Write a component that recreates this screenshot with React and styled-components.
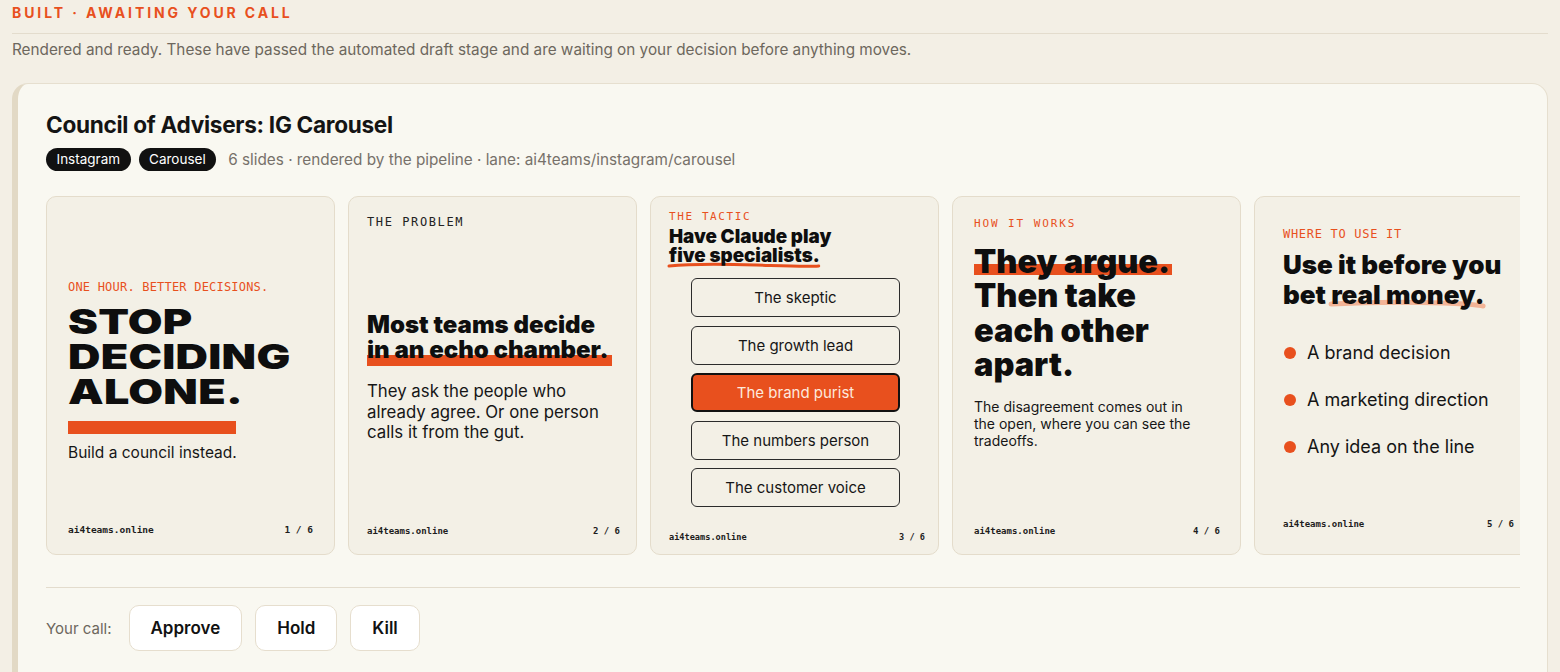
import styled, { createGlobalStyle } from 'styled-components'

const ORANGE = '#e8501e'
const INK = '#141414'
const MONO = '"DejaVu Sans Mono", "Liberation Mono", monospace'
const HEAVY = 'Inter, "Liberation Sans", sans-serif'

const GlobalStyle = createGlobalStyle`
  body {
    margin: 0;
    background: #f3efe5;
    font-family: Inter, "Noto Sans", sans-serif;
    color: ${INK};
  }
`

const Page = styled.div`
  padding: 4px 12px 0;
`

const SectionHead = styled.h2`
  margin: 0;
  padding-bottom: 12px;
  border-bottom: 1px solid #e3dccd;
  font-size: 14px;
  line-height: 17px;
  font-weight: 700;
  letter-spacing: 2.9px;
  color: ${ORANGE};
`

const Lede = styled.p`
  margin: 7px 0 24px;
  font-size: 15.3px;
  line-height: 18px;
  color: #6d675d;
`

const Card = styled.section`
  background: #f9f8f1;
  border: 1px solid #e6dfcf;
  border-left: 6px solid #e2d9c5;
  border-radius: 16px;
  padding: 27px 27px 40px 28px;
`

const Title = styled.h3`
  margin: 0;
  font-size: 22.6px;
  line-height: 28px;
  font-weight: 700;
  letter-spacing: -0.3px;
`

const MetaRow = styled.div`
  display: flex;
  align-items: center;
  gap: 8px;
  margin-top: 9px;
`

const Tag = styled.span`
  background: #111;
  color: #fff;
  font-size: 13.5px;
  line-height: 23px;
  padding: 0 10.5px;
  border-radius: 12px;
`

const Meta = styled.span`
  margin-left: 4px;
  font-size: 15.3px;
  color: #77716a;
`

const Strip = styled.div`
  display: flex;
  gap: 13px;
  margin-top: 25px;
  overflow: hidden;
`

const Slide = styled.div`
  flex: 0 0 289px;
  height: 359px;
  box-sizing: border-box;
  display: flex;
  flex-direction: column;
  padding: ${p => p.$pad};
  background: #f3f0e6;
  border: 1px solid #e4dccb;
  border-radius: 10px;
`

const Body = styled.div`
  flex: 1;
  display: flex;
  flex-direction: column;
  justify-content: ${p => p.$justify || 'flex-start'};
`

const Kicker = styled.div`
  font-family: ${MONO};
  font-size: ${p => p.$size}px;
  line-height: 14px;
  letter-spacing: ${p => p.$spacing}px;
  color: ${p => (p.$dark ? '#222' : ORANGE)};
`

const Headline = styled.h4`
  margin: ${p => p.$mt || 0}px 0 0;
  font-family: ${HEAVY};
  font-weight: 900;
  font-size: ${p => p.$size}px;
  line-height: ${p => p.$lh}px;
  letter-spacing: ${p => p.$spacing || 0}px;
  color: #0e0e0e;
  isolation: isolate;
  transform-origin: left center;
  transform: ${p => (p.$stretch ? `scaleX(${p.$stretch})` : 'none')};
`

const Marked = styled.span`
  position: relative;
  &::before {
    content: '';
    position: absolute;
    z-index: -1;
    left: 0;
    right: ${p => p.$right || 0}px;
    top: ${p => p.$top}px;
    height: ${p => p.$height}px;
    background: ${ORANGE};
  }
`

const Scribbled = styled.span`
  position: relative;
  svg {
    position: absolute;
    z-index: -1;
    left: ${p => p.$left}px;
    top: ${p => p.$top}px;
    width: calc(100% + ${p => -2 * p.$left}px);
    height: 10px;
  }
`

const Bar = styled.div`
  width: 168px;
  height: 13px;
  margin-top: 12.5px;
  background: ${ORANGE};
`

const Copy = styled.p`
  margin: ${p => p.$mt}px 0 0;
  font-size: ${p => p.$size}px;
  line-height: ${p => p.$lh}px;
  color: #161616;
`

const Roles = styled.div`
  display: flex;
  flex-direction: column;
  align-items: center;
  gap: 8.5px;
  margin-top: 13px;
  margin-left: -3px;
`

const Role = styled.div`
  width: 209px;
  height: 39px;
  box-sizing: border-box;
  display: flex;
  align-items: center;
  justify-content: center;
  font-size: 15px;
  border-radius: 6px;
  border: ${p => (p.$active ? '2.5px solid #111' : '1.5px solid #2b2b2b')};
  background: ${p => (p.$active ? ORANGE : 'transparent')};
  color: ${p => (p.$active ? '#fde9dd' : '#161616')};
`

const Bullets = styled.ul`
  list-style: none;
  margin: 32px 0 0;
  padding: 0;
  display: flex;
  flex-direction: column;
  gap: 25px;
`

const Bullet = styled.li`
  display: flex;
  align-items: center;
  gap: 11px;
  font-size: 18px;
  line-height: 22px;
  &::before {
    content: '';
    width: 12px;
    height: 12px;
    border-radius: 50%;
    background: ${ORANGE};
    margin-left: 1px;
  }
`

const SlideFoot = styled.div`
  display: flex;
  justify-content: space-between;
  font-family: ${MONO};
  font-size: ${p => p.$size}px;
  font-weight: 600;
  color: #1d1d1d;
`

const Actions = styled.div`
  display: flex;
  align-items: center;
  gap: 13px;
  margin-top: 32px;
  padding-top: 17px;
  border-top: 1px solid #e3dccd;
`

const CallLabel = styled.span`
  font-size: 15px;
  color: #6d675d;
  margin-right: 4px;
`

const CallButton = styled.button`
  height: 46px;
  padding: 0 21px;
  background: #fff;
  border: 1px solid #e6dece;
  border-radius: 10px;
  font-family: Inter, sans-serif;
  font-size: 17px;
  font-weight: 600;
  color: #111;
`

function Foot({ n, size = 9.5 }) {
  return (
    <SlideFoot $size={size}>
      <span>ai4teams.online</span>
      <span>{n} / 6</span>
    </SlideFoot>
  )
}

const roles = ['The skeptic', 'The growth lead', 'The brand purist', 'The numbers person', 'The customer voice']

export default function App() {
  return (
    <Page>
      <GlobalStyle />
      <SectionHead>BUILT · AWAITING YOUR CALL</SectionHead>
      <Lede>
        Rendered and ready. These have passed the automated draft stage and are waiting on your decision before anything moves.
      </Lede>
      <Card>
        <Title>Council of Advisers: IG Carousel</Title>
        <MetaRow>
          <Tag>Instagram</Tag>
          <Tag>Carousel</Tag>
          <Meta>6 slides · rendered by the pipeline · lane: ai4teams/instagram/carousel</Meta>
        </MetaRow>

        <Strip>
          <Slide $pad="22px 21px 19px 21px">
            <Body $justify="center">
              <Kicker $size={12} $spacing={0.2}>ONE HOUR. BETTER DECISIONS.</Kicker>
              <Headline $mt={9.5} $size={34} $lh={35} $spacing={0.2} $stretch={1.32}>
                STOP<br />DECIDING<br />ALONE.
              </Headline>
              <Bar />
              <Copy $mt={9} $size={15.5} $lh={20}>Build a council instead.</Copy>
            </Body>
            <Foot n={1} />
          </Slide>

          <Slide $pad="18px 16px 18px 18px">
            <Kicker $size={12} $spacing={1.6} $dark>THE PROBLEM</Kicker>
            <Body $justify="center">
              <Headline $size={24} $lh={25}>
                Most teams decide<br />
                <Marked $top={20} $height={11} $right={-4}>in an echo chamber.</Marked>
              </Headline>
              <Copy $mt={19} $size={16.8} $lh={20.5}>
                They ask the people who<br />already agree. Or one person<br />calls it from the gut.
              </Copy>
            </Body>
            <Foot n={2} size={9} />
          </Slide>

          <Slide $pad="13px 13px 12px 18px">
            <Kicker $size={11} $spacing={1.6}>THE TACTIC</Kicker>
            <Headline $mt={3} $size={18.8} $lh={19}>
              Have Claude play<br />
              <Scribbled $left={-2} $top={16}>
                five specialists.
                <svg viewBox="0 0 156 10" preserveAspectRatio="none">
                  <path d="M2 6 C 30 3, 60 4, 90 5 S 140 7, 153 6" stroke={ORANGE} strokeWidth="3" fill="none" strokeLinecap="round" />
                </svg>
              </Scribbled>
            </Headline>
            <Roles>
              {roles.map((r, i) => (
                <Role key={r} $active={i === 2}>{r}</Role>
              ))}
            </Roles>
            <Body />
            <Foot n={3} size={8.6} />
          </Slide>

          <Slide $pad="20px 20px 18px 21px">
            <Kicker $size={11} $spacing={1.9}>HOW IT WORKS</Kicker>
            <Headline $mt={14} $size={32.5} $lh={34.3}>
              <Marked $top={22} $height={11} $right={-2}>They argue.</Marked><br />
              Then take<br />each other<br />apart.
            </Headline>
            <Copy $mt={16} $size={14} $lh={17}>
              The disagreement comes out in<br />the open, where you can see the<br />tradeoffs.
            </Copy>
            <Body />
            <Foot n={4} size={9} />
          </Slide>

          <Slide $pad="30px 28px 25px 28px">
            <Kicker $size={12} $spacing={0.7}>WHERE TO USE IT</Kicker>
            <Headline $mt={9} $size={26} $lh={30}>
              Use it before you<br />
              bet{' '}
              <Scribbled $left={-3} $top={20}>
                real money.
                <svg viewBox="0 0 152 10" preserveAspectRatio="none">
                  <path d="M3 5 C 40 3, 80 3, 110 4 S 140 6, 148 7" stroke="#f2b497" strokeWidth="5" fill="none" strokeLinecap="round" />
                </svg>
              </Scribbled>
            </Headline>
            <Bullets>
              <Bullet>A brand decision</Bullet>
              <Bullet>A marketing direction</Bullet>
              <Bullet>Any idea on the line</Bullet>
            </Bullets>
            <Body />
            <Foot n={5} size={9} />
          </Slide>
        </Strip>

        <Actions>
          <CallLabel>Your call:</CallLabel>
          <CallButton>Approve</CallButton>
          <CallButton>Hold</CallButton>
          <CallButton>Kill</CallButton>
        </Actions>
      </Card>
    </Page>
  )
}
